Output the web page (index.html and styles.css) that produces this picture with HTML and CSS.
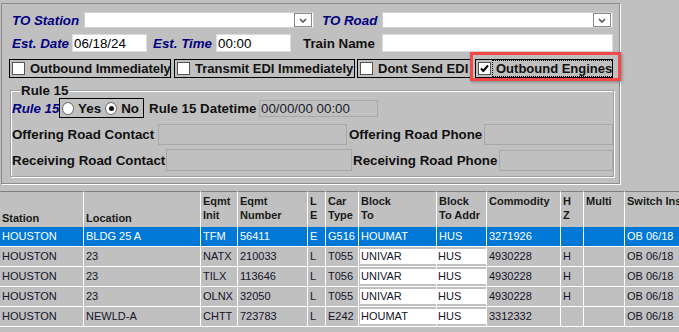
FILE: index.html
```html
<!DOCTYPE html>
<html lang="en">
<head>
	<meta charset="UTF-8">
	<title>Outbound Train</title>
	<link rel="stylesheet" href="styles.css">
</head>
<body>
<div class="main_wrap">
	<div class="form_wrap">
		<div class="form_row row_top">
			<label class="lbl_blue lbl_station">TO Station</label>
			<span class="select_box sel_station"><span class="select_btn"><svg width="8" height="5" viewBox="0 0 8 5"><polyline points="1,1 4,4 7,1" fill="none" stroke="#555" stroke-width="1.6"/></svg></span></span>
			<label class="lbl_blue lbl_road">TO Road</label>
			<span class="select_box sel_road"><span class="select_btn"><svg width="8" height="5" viewBox="0 0 8 5"><polyline points="1,1 4,4 7,1" fill="none" stroke="#555" stroke-width="1.6"/></svg></span></span>
		</div>
		<div class="form_row row_date">
			<label class="lbl_blue lbl_date">Est. Date</label>
			<input type="text" class="input_box in_date" value="06/18/24">
			<label class="lbl_blue lbl_time">Est. Time</label>
			<input type="text" class="input_box in_time" value="00:00">
			<label class="lbl_black lbl_train">Train Name</label>
			<input type="text" class="input_box in_train" value="">
		</div>
		<div class="form_row row_check">
			<label class="check_item chk_ob"><span class="check_box"></span><span class="check_text">Outbound Immediately</span></label>
			<label class="check_item chk_edi"><span class="check_box"></span><span class="check_text">Transmit EDI Immediately</span></label>
			<label class="check_item chk_dont"><span class="check_box"></span><span class="check_text">Dont Send EDI</span></label>
			<label class="check_item chk_eng"><span class="check_box"><svg width="11" height="11" viewBox="0 0 11 11"><path d="M2 5.5 L4.3 8 L9 2.5" fill="none" stroke="#000" stroke-width="2"/></svg></span><span class="check_text focus_text">Outbound Engines</span></label>
		</div>
		<fieldset class="rule_wrap">
			<legend>Rule 15</legend>
			<div class="rule_row row_rule">
				<label class="lbl_blue lbl_rule">Rule 15</label>
				<span class="radio_group">
					<span class="radio_dot"></span><span class="radio_text">Yes</span>
					<span class="radio_dot radio_on"></span><span class="radio_text">No</span>
				</span>
				<label class="lbl_black lbl_datetime">Rule 15 Datetime</label>
				<input type="text" class="input_off in_datetime" value="00/00/00 00:00" disabled>
			</div>
			<div class="rule_row row_offer">
				<label class="lbl_black lbl_offer">Offering Road Contact</label>
				<input type="text" class="input_off in_offer" value="" disabled>
				<label class="lbl_black lbl_offer_ph">Offering Road Phone</label>
				<input type="text" class="input_off in_offer_ph" value="" disabled>
			</div>
			<div class="rule_row row_recv">
				<label class="lbl_black lbl_recv">Receiving Road Contact</label>
				<input type="text" class="input_off in_recv" value="" disabled>
				<label class="lbl_black lbl_recv_ph">Receiving Road Phone</label>
				<input type="text" class="input_off in_recv_ph" value="" disabled>
			</div>
		</fieldset>
		<div class="mark_box"></div>
	</div>

	<div class="grid_wrap">
		<table class="grid">
			<colgroup>
				<col class="c_station"><col class="c_location"><col class="c_init"><col class="c_number"><col class="c_le"><col class="c_type"><col class="c_block"><col class="c_addr"><col class="c_comm"><col class="c_hz"><col class="c_multi"><col class="c_switch">
			</colgroup>
			<thead>
				<tr>
					<th class="th_bottom">Station</th>
					<th class="th_bottom">Location</th>
					<th>Eqmt<br>Init</th>
					<th>Eqmt<br>Number</th>
					<th>L<br>E</th>
					<th>Car<br>Type</th>
					<th>Block<br>To</th>
					<th>Block<br>To Addr</th>
					<th>Commodity</th>
					<th>H<br>Z</th>
					<th>Multi</th>
					<th>Switch Ins</th>
				</tr>
			</thead>
			<tbody>
				<tr class="row_sel">
					<td>HOUSTON</td><td>BLDG 25 A</td><td>TFM</td><td>56411</td><td>E</td><td>G516</td><td>HOUMAT</td><td>HUS</td><td>3271926</td><td></td><td></td><td>OB 06/18</td>
				</tr>
				<tr>
					<td>HOUSTON</td><td>23</td><td>NATX</td><td>210033</td><td>L</td><td>T055</td><td class="td_in"><span class="cell_input">UNIVAR</span></td><td class="td_in"><span class="cell_input addr_input">HUS</span></td><td>4930228</td><td>H</td><td></td><td>OB 06/18</td>
				</tr>
				<tr>
					<td>HOUSTON</td><td>23</td><td>TILX</td><td>113646</td><td>L</td><td>T056</td><td class="td_in"><span class="cell_input">UNIVAR</span></td><td class="td_in"><span class="cell_input addr_input">HUS</span></td><td>4930228</td><td>H</td><td></td><td>OB 06/18</td>
				</tr>
				<tr>
					<td>HOUSTON</td><td>23</td><td>OLNX</td><td>32050</td><td>L</td><td>T055</td><td class="td_in"><span class="cell_input">UNIVAR</span></td><td class="td_in"><span class="cell_input addr_input">HUS</span></td><td>4930228</td><td>H</td><td></td><td>OB 06/18</td>
				</tr>
				<tr>
					<td>HOUSTON</td><td>NEWLD-A</td><td>CHTT</td><td>723783</td><td>L</td><td>E242</td><td class="td_in"><span class="cell_input">HOUMAT</span></td><td class="td_in"><span class="cell_input addr_input">HUS</span></td><td>3312332</td><td></td><td></td><td>OB 06/18</td>
				</tr>
			</tbody>
		</table>
	</div>
</div>
</body>
</html>
```

FILE: styles.css
```css
body,div,table,th,td,fieldset,legend,input,label{margin:0;padding:0}
body{background:#c0c0c0;overflow:hidden;font-family:'Liberation Sans',Arial,sans-serif;font-size:13.33px;color:#111}
input{font-family:'Liberation Sans',Arial,sans-serif}
.main_wrap{width:679px;overflow:hidden}

/* top form panel */
.form_wrap{position:relative;box-sizing:border-box;width:619px;margin:3px 0 0 1px;padding:0 0 6px 0;border:1px solid #8c8c8c;box-shadow:1px 1px 0 #fff}
.form_wrap .form_row{display:flex;align-items:center;padding-left:10px}
.form_wrap .row_top{height:16px;margin-top:8px}
.form_wrap .row_date{height:18px;margin-top:6px}
.form_wrap .row_check{height:19px;margin-top:7px;padding-left:7px}
.lbl_blue{font-weight:bold;font-style:italic;color:#000080;white-space:nowrap}
.lbl_black{font-weight:bold;color:#111;white-space:nowrap}
.lbl_station{width:72px}
.lbl_road{width:60px;margin-left:8px}
.lbl_date{width:60px}
.lbl_time{width:63px;margin-left:6px}
.lbl_train{width:79px;margin-left:12px}

.select_box{display:flex;justify-content:flex-end;align-items:center;box-sizing:border-box;height:16px;padding-right:1px;background:#fff;border:1px solid #cfcfcf}
.sel_station{width:230px}
.sel_road{width:231px}
.select_box .select_btn{display:flex;align-items:center;justify-content:center;box-sizing:border-box;width:18px;height:14px;border:1px solid #8a8a8a;background:#fff}

.input_box{box-sizing:border-box;height:18px;padding:0 1px;border:1px solid #dcdcdc;background:#fff;font-size:13.33px;color:#000;outline:none}
.in_date,.in_time{width:75px}
.in_train{width:231px}

.check_item{display:flex;align-items:center;box-sizing:border-box;height:19px;padding-left:2px;border:1px solid #000;overflow:hidden;white-space:nowrap;font-size:13px;font-weight:bold}
.chk_ob{width:162px}
.chk_edi{width:181px;margin-left:3px}
.chk_dont{width:114px;margin-left:2px}
.chk_eng{width:138px;margin-left:4px}
.check_item .check_box{display:flex;align-items:center;justify-content:center;flex:none;box-sizing:border-box;width:13px;height:13px;border:1px solid #555;background:#fff}
.check_item .check_text{margin-left:5px}
.check_item .focus_text{margin-left:2px;padding:0 1px 0 3px;line-height:15px;outline:1px dotted #000}

/* rule 15 */
.rule_wrap{box-sizing:border-box;width:604px;margin:5px 0 0 8px;padding:0 0 4px 1px;border:1px solid #a0a0a0;box-shadow:inset 1px 1px 0 #fff,1px 1px 0 #fff}
.rule_wrap legend{margin-left:8px;padding:0 1px;line-height:15px;font-weight:bold;background:#c0c0c0}
.rule_wrap .rule_row{display:flex;align-items:center}
.rule_wrap .row_rule{height:20px}
.rule_wrap .row_offer{height:24px;margin-top:4px}
.rule_wrap .row_recv{height:24px;margin-top:2px}
.lbl_rule{width:47px}
.radio_group{display:flex;align-items:center;box-sizing:border-box;width:85px;height:20px;padding-left:2px;border:1px solid #000;font-weight:bold}
.radio_group .radio_dot{display:flex;align-items:center;justify-content:center;box-sizing:border-box;width:13px;height:13px;border:1px solid #6e6e6e;border-radius:50%;background:#fff}
.radio_group .radio_on:after{content:'';width:5px;height:5px;border-radius:50%;background:#111}
.radio_group .radio_text{margin:0 4px 0 4px}
.lbl_datetime{width:106px;margin-left:5px}
.input_off{box-sizing:border-box;padding:0 1px;border:1px solid #a8a8a8;background:#c0c0c0;font-size:13.33px;color:#1a1a2a;outline:none}
.in_datetime{width:119px;height:17px;margin-left:4px}
.lbl_offer{width:146px}
.in_offer{width:189px;height:21px}
.lbl_offer_ph{width:135px;margin-left:2px}
.in_offer_ph{width:129px;height:21px}
.lbl_recv{width:154px}
.in_recv{width:186px;height:22px}
.lbl_recv_ph{width:146px;margin-left:1px}
.in_recv_ph{width:114px;height:21px}

.mark_box{position:absolute;left:468px;top:48px;box-sizing:border-box;width:151px;height:29px;border:3px solid #f24848;box-shadow:1px 1px 3px rgba(0,0,0,.35)}

/* car grid */
.grid_wrap{margin-top:7px;width:679px;overflow:hidden}
.grid{border-collapse:separate;border-spacing:0;table-layout:fixed;width:745px;font-size:11px}
.grid .c_station{width:84px}
.grid .c_location{width:117px}
.grid .c_init{width:37px}
.grid .c_number{width:70px}
.grid .c_le{width:18px}
.grid .c_type{width:33px}
.grid .c_block{width:78px}
.grid .c_addr{width:50px}
.grid .c_comm{width:74px}
.grid .c_hz{width:23px}
.grid .c_multi{width:41px}
.grid .c_switch{width:120px}
.grid th{height:33px;padding:2px 1px 0 2px;border-top:1px solid #808080;border-right:1px solid #fff;vertical-align:top;text-align:left;line-height:14px;font-weight:bold;color:#1a1a1a;white-space:nowrap;overflow:hidden}
.grid th.th_bottom{vertical-align:bottom;padding:0 1px 2px 2px}
.grid td{height:19px;padding:0 1px 0 2px;border-right:1px solid #fff;border-bottom:1px solid #fff;line-height:19px;color:#14142a;white-space:nowrap;overflow:hidden}
.grid .row_sel td{background:#0078d7;color:#fff}
.grid td.td_in{padding:0}
.grid .cell_input{display:block;height:15px;margin:2px 0 2px 1px;padding-left:1px;line-height:15px;background:#fff}
.grid .addr_input{margin-left:0}
```
